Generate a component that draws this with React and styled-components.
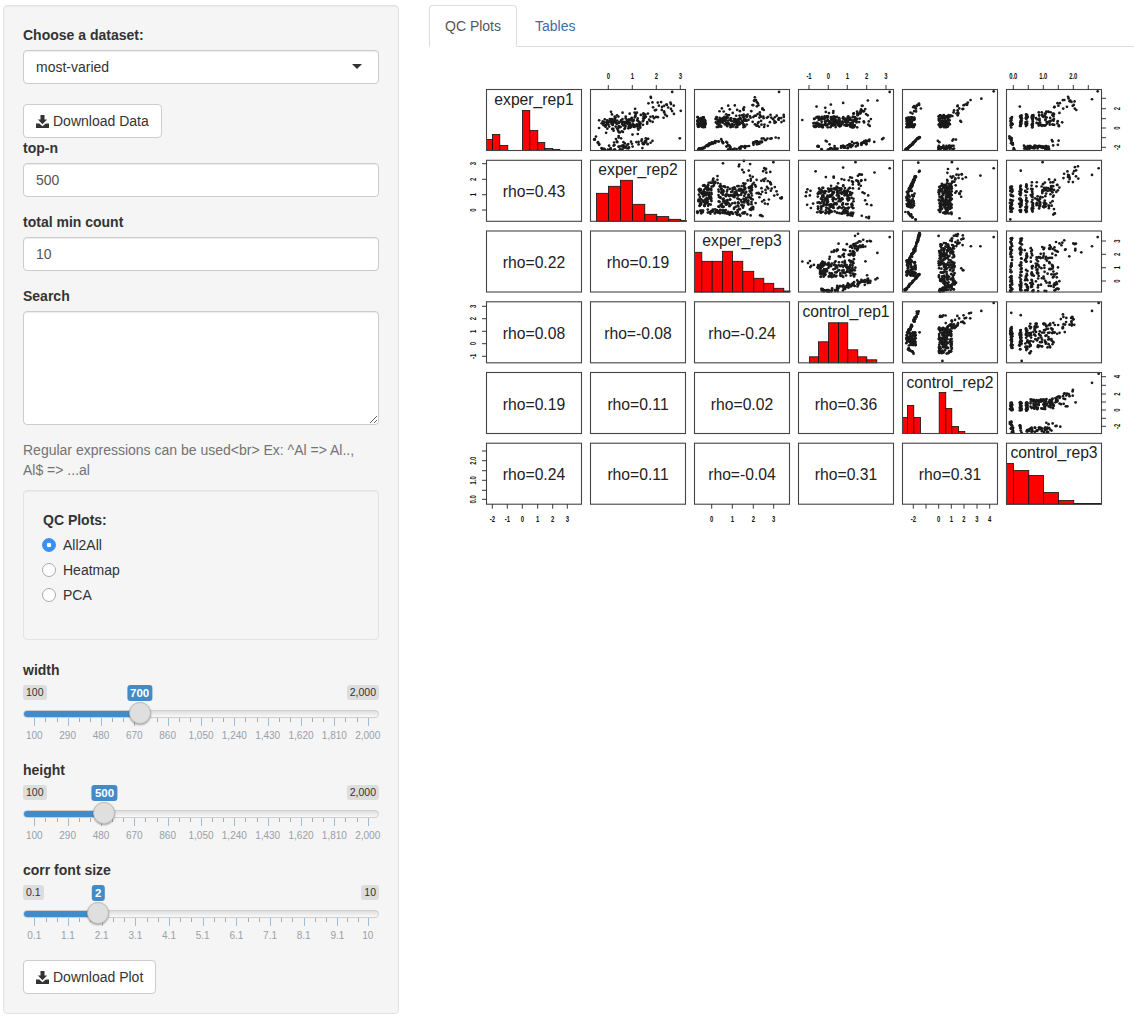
import styled, { createGlobalStyle } from "styled-components";

const GlobalStyle = createGlobalStyle`
  body {
    margin: 0;
    background: #fff;
    font-family: "Liberation Sans", Arial, sans-serif;
    font-size: 14px;
    line-height: 20px;
    color: #333;
  }
  * { box-sizing: border-box; }
`;

const Page = styled.div`
  display: flex;
  align-items: flex-start;
  width: 1134px;
`;

const Sidebar = styled.aside`
  flex: 0 0 396px;
  margin: 5px 0 0 3px;
  padding: 19px;
  background: #f5f5f5;
  border: 1px solid #e3e3e3;
  border-radius: 4px;
  box-shadow: inset 0 1px 1px rgba(0, 0, 0, 0.05);
`;

const Main = styled.main`
  flex: 1;
  margin: 5px 0 0 30px;
  min-width: 0;
`;

const Field = styled.div`
  margin-bottom: ${(p) => p.$gap ?? 15}px;
`;

const Label = styled.label`
  display: block;
  margin-bottom: 5px;
  font-weight: 700;
`;

const SliderLabel = styled.div`
  font-weight: 700;
`;

const SelectBox = styled.div`
  position: relative;
  height: 34px;
  padding: 6px 12px;
  background: #fff;
  border: 1px solid #ccc;
  border-radius: 4px;
  color: #333;
  box-shadow: inset 0 1px 1px rgba(0, 0, 0, 0.075);
  &::after {
    content: "";
    position: absolute;
    right: 16px;
    top: 13px;
    border-style: solid;
    border-width: 5px 5.5px 0;
    border-color: #333 transparent transparent;
  }
`;

const TextInput = styled.input`
  display: block;
  width: 100%;
  height: 34px;
  padding: 6px 12px;
  background: #fff;
  border: 1px solid #ccc;
  border-radius: 4px;
  color: #555;
  font: inherit;
  box-shadow: inset 0 1px 1px rgba(0, 0, 0, 0.075);
`;

const TextArea = styled.textarea`
  display: block;
  width: 100%;
  height: 114px;
  padding: 6px 12px;
  background: #fff;
  border: 1px solid #ccc;
  border-radius: 4px;
  font: inherit;
  box-shadow: inset 0 1px 1px rgba(0, 0, 0, 0.075);
`;

const Help = styled.div`
  max-width: 345px;
  margin-bottom: 10px;
  color: #737373;
`;

const Button = styled.button`
  display: inline-flex;
  align-items: center;
  gap: 4px;
  height: 34px;
  padding: 6px 12px;
  background: #fff;
  border: 1px solid #ccc;
  border-radius: 4px;
  color: #333;
  font: inherit;
  vertical-align: top;
`;

const ButtonRow = styled.div`
  height: 34px;
`;

const Well = styled.div`
  height: 150px;
  margin-bottom: 20px;
  padding: 19px;
  background: #f5f5f5;
  border: 1px solid #e3e3e3;
  border-radius: 4px;
  box-shadow: inset 0 1px 1px rgba(0, 0, 0, 0.05);
`;

const RadioRow = styled.div`
  display: flex;
  align-items: center;
  gap: 7px;
  height: 20px;
  margin: 0 0 5px -1px;
`;

const RadioDot = styled.span`
  flex: 0 0 14px;
  height: 14px;
  border-radius: 50%;
  background: ${(p) => (p.$checked ? "radial-gradient(circle, #fff 2px, #3b8ff3 2.6px)" : "#fff")};
  border: 1px solid ${(p) => (p.$checked ? "#3b8ff3" : "#aaa")};
`;

const SliderBlock = styled.div`
  position: relative;
  height: 60px;
  margin-bottom: 20px;
`;

const EdgeTag = styled.span`
  position: absolute;
  top: 5px;
  ${(p) => (p.$right ? "right: 0;" : "left: 0;")}
  height: 15px;
  padding: 0 3px;
  background: #ddd;
  border-radius: 3px;
  color: #333;
  font-size: 10.5px;
  line-height: 15px;
`;

const Track = styled.div`
  position: absolute;
  top: 30px;
  left: 0;
  right: 0;
  height: 8px;
  overflow: hidden;
  border: 1px solid #cfcfcf;
  border-radius: 4px;
  background: linear-gradient(to bottom, #dedede, #fafafa);
`;

const TrackFill = styled.div`
  height: 8px;
  margin-top: -1px;
  background: #428bca;
`;

const Scale = styled.div`
  position: absolute;
  top: 0;
  bottom: 0;
  left: 11.3px;
  right: 11.3px;
`;

const Mark = styled.span`
  position: absolute;
  top: 38px;
  width: 1px;
  height: ${(p) => (p.$major ? 8 : 4)}px;
  background: ${(p) => (p.$major ? "#9dbcd8" : "#aaa")};
`;

const MarkText = styled.span`
  position: absolute;
  top: 50px;
  transform: translateX(-50%);
  color: #98a0a8;
  font-size: 10px;
  line-height: 12px;
`;

const Badge = styled.span`
  position: absolute;
  top: 5px;
  height: 16px;
  padding: 0 3px;
  transform: translateX(-50%);
  background: #428bca;
  border-radius: 3px;
  color: #fff;
  font-size: 11.5px;
  font-weight: 700;
  line-height: 16px;
`;

const Handle = styled.span`
  position: absolute;
  top: 22px;
  width: 22px;
  height: 22px;
  transform: translateX(-50%);
  background: #dfdfdf;
  border: 1px solid #bdbdbd;
  border-radius: 50%;
  box-shadow: 0 1px 2px rgba(0, 0, 0, 0.35);
`;

const TabBar = styled.div`
  display: flex;
  gap: 2px;
  height: 42px;
  border-bottom: 1px solid #ddd;
`;

const Tab = styled.div`
  height: 42px;
  padding: 10px 15px;
  border: 1px solid ${(p) => (p.$active ? "#ddd" : "transparent")};
  border-bottom-color: ${(p) => (p.$active ? "#fff" : "transparent")};
  border-radius: 4px 4px 0 0;
  background: ${(p) => (p.$active ? "#fff" : "transparent")};
  color: ${(p) => (p.$active ? "#555" : "#3a6ea5")};
`;

const PlotSvg = styled.svg`
  display: block;
  width: 700px;
  height: 500px;
  margin-left: 5px;
`;

const CellText = styled.text`
  fill: #222;
  font-family: "Liberation Sans", Arial, sans-serif;
  font-size: 15.7px;
  text-anchor: middle;
`;

const AxisText = styled.text`
  fill: #111;
  font-family: "Liberation Sans", Arial, sans-serif;
  font-size: 8.2px;
  font-weight: 700;
  text-anchor: middle;
`;

function DownloadIcon() {
  return (
    <svg width="13" height="13" viewBox="0 0 13 13" fill="#333">
      <path d="M4.5 0h4v4.6h2.6L6.5 9.2 1.9 4.6h2.6z" />
      <path d="M0 8.6h3.2l3.3 2.6 3.3-2.6H13V13H0z" />
    </svg>
  );
}

const widthMarks = [100, 290, 480, 670, 860, 1050, 1240, 1430, 1620, 1810, 2000];
const fontMarks = [0.1, 1.1, 2.1, 3.1, 4.1, 5.1, 6.1, 7.1, 8.1, 9.1, 10];
const fmt = (v) => v.toLocaleString("en-US");

function RangeSlider({ min, max, value, marks }) {
  const pct = (v) => ((v - min) / (max - min)) * 100;
  const minors = marks.slice(1).flatMap((m, i) => {
    const step = (m - marks[i]) / 3;
    return [marks[i] + step, marks[i] + step * 2];
  });
  return (
    <SliderBlock>
      <EdgeTag>{fmt(min)}</EdgeTag>
      <EdgeTag $right>{fmt(max)}</EdgeTag>
      <Track>
        <TrackFill style={{ width: 11.3 + pct(value) * 3.334 }} />
      </Track>
      <Scale>
        {minors.map((m) => (
          <Mark key={m} style={{ left: `${pct(m)}%` }} />
        ))}
        {marks.map((m) => (
          <Mark key={m} $major style={{ left: `${pct(m)}%` }} />
        ))}
        {marks.map((m) => (
          <MarkText key={m} style={{ left: `${pct(m)}%` }}>
            {fmt(m)}
          </MarkText>
        ))}
        <Handle style={{ left: `${pct(value)}%` }} />
        <Badge style={{ left: `${pct(value)}%` }}>{fmt(value)}</Badge>
      </Scale>
    </SliderBlock>
  );
}

// plot geometry, in page pixels
const colX = [486.5, 590.5, 694.5, 798.5, 902.5, 1006.5];
const rowY = [89.5, 160.3, 231, 301.8, 372.5, 443.2];
const CELL_W = 95;
const CELL_H = 61;

const names = ["exper_rep1", "exper_rep2", "exper_rep3", "control_rep1", "control_rep2", "control_rep3"];

const rho = {
  "1,0": "0.43", "2,0": "0.22", "2,1": "0.19", "3,0": "0.08", "3,1": "-0.08", "3,2": "-0.24",
  "4,0": "0.19", "4,1": "0.11", "4,2": "0.02", "4,3": "0.36",
  "5,0": "0.24", "5,1": "0.11", "5,2": "-0.04", "5,3": "0.31", "5,4": "0.31",
};

// histogram bars as bin edges and heights, in pixels inside the cell
const hists = [
  { x: [0, 6, 13.3, 21.3, 36, 43.3, 51.3, 58.3, 66.3, 73.3], h: [11, 16, 5, 0, 40, 20, 8, 2, 1] },
  { x: [6, 18, 30, 42, 54.3, 66.3, 78.3, 90.3, 96], h: [28, 35, 41, 17, 7, 4.7, 2, 0.7] },
  { x: [0, 7.3, 17.7, 28, 38, 48.3, 59.3, 69.3, 79.3, 89.3, 95.6], h: [39.7, 30.7, 30.7, 40.7, 30.7, 20.7, 13.7, 8.7, 3.7, 1] },
  { x: [11, 20, 30, 40, 49.3, 59.3, 68.3, 78.3], h: [6, 21, 40, 40, 13, 6, 3] },
  { x: [0, 5, 11.3, 18, 36.7, 43.3, 49.3, 56, 62.3], h: [16, 28, 16, 0, 41, 25, 7, 2] },
  { x: [0, 7, 22.3, 37, 52, 67.3, 95], h: [40.7, 33.7, 28.7, 11.7, 3.7, 0.7] },
];

function makeRandom(seed) {
  let s = seed;
  return () => {
    s = (s + 0x6d2b79f5) | 0;
    let t = Math.imul(s ^ (s >>> 15), 1 | s);
    t = (t + Math.imul(t ^ (t >>> 7), 61 | t)) ^ t;
    return ((t ^ (t >>> 14)) >>> 0) / 4294967296;
  };
}

// [n, x0, y0, x1, y1, jitter]: n points along a line, or a box when jitter is "box"
const clouds = {
  "0,1": [
    [110, 0.13, 0.56, 0.55, 0.54, 0.05], [45, 0.45, 0.5, 0.9, 0.24, 0.04], [40, 0.13, 0.5, 0.5, 0.62, "box"],
    [12, 0.03, 0.8, 0.15, 1, 0.005], [50, 0.2, 0.98, 0.63, 0.85, 0.025], [10, 0.25, 0.8, 0.42, 0.92, 0.03],
    [1, 0.86, 0.04, 0.86, 0.04, 0], [1, 0.95, 0.35, 0.95, 0.35, 0], [1, 0.94, 0.8, 0.94, 0.8, 0], [5, 0.6, 0.2, 0.7, 0.2, 0.02],
  ],
  "0,2": [
    [70, 0.03, 0.45, 0.12, 0.62, "box"], [110, 0.22, 0.45, 0.55, 0.62, "box"], [50, 0.5, 0.4, 0.95, 0.62, "box"],
    [30, 0.25, 0.25, 0.75, 0.45, "box"], [40, 0.03, 1, 0.22, 0.85, 0.006], [22, 0.25, 0.8, 0.4, 1, 0.025],
    [40, 0.42, 1, 0.75, 0.82, 0.012], [1, 0.89, 0.04, 0.89, 0.04, 0], [5, 0.75, 0.8, 0.9, 0.8, 0.005], [6, 0.6, 0.12, 0.68, 0.22, 0.02],
  ],
  "0,3": [
    [190, 0.15, 0.44, 0.6, 0.62, "box"], [30, 0.55, 0.52, 0.72, 0.3, 0.025], [10, 0.65, 0.6, 0.75, 0.5, 0.03],
    [6, 0.2, 0.92, 0.25, 1, 0.005], [60, 0.3, 1, 0.8, 0.83, 0.015], [3, 0.28, 0.84, 0.33, 0.9, 0.01],
    [1, 0.96, 0.04, 0.96, 0.04, 0], [1, 0.83, 0.18, 0.83, 0.18, 0], [1, 0.73, 0.18, 0.73, 0.18, 0], [1, 0.47, 0.22, 0.47, 0.22, 0],
    [1, 0.19, 0.28, 0.19, 0.28, 0], [1, 0.04, 0.5, 0.04, 0.5, 0], [2, 0.9, 0.8, 0.85, 0.82, 0.01], [6, 0.28, 0.3, 0.4, 0.38, 0.03],
  ],
  "0,4": [
    [80, 0.04, 0.45, 0.13, 0.62, "box"], [14, 0.1, 0.42, 0.18, 0.22, 0.015], [50, 0.03, 1, 0.18, 0.78, 0.004],
    [100, 0.38, 0.42, 0.5, 0.62, "box"], [24, 0.48, 0.48, 0.72, 0.18, 0.025], [8, 0.38, 0.8, 0.38, 1, 0.004], [40, 0.39, 0.92, 0.55, 0.98, "box"],
    [3, 0.48, 0.84, 0.6, 0.82, 0.005], [1, 0.96, 0.03, 0.96, 0.03, 0], [1, 0.83, 0.15, 0.83, 0.15, 0], [2, 0.6, 0.5, 0.64, 0.5, 0.01],
  ],
  "0,5": [
    [18, 0.05, 0.45, 0.05, 0.62, 0.006], [18, 0.15, 0.42, 0.15, 0.62, 0.006], [22, 0.21, 0.42, 0.21, 0.62, 0.006],
    [22, 0.27, 0.4, 0.27, 0.62, 0.006], [50, 0.31, 0.36, 0.5, 0.6, "box"], [20, 0.45, 0.4, 0.72, 0.2, 0.04], [6, 0.5, 0.55, 0.55, 0.6, 0.02],
    [20, 0.04, 0.78, 0.08, 1, 0.006], [55, 0.17, 0.92, 0.45, 0.98, "box"], [5, 0.45, 0.84, 0.55, 0.85, 0.02],
    [1, 0.96, 0.03, 0.96, 0.03, 0], [1, 0.9, 0.16, 0.9, 0.16, 0], [1, 0.14, 0.28, 0.14, 0.28, 0], [3, 0.65, 0.25, 0.72, 0.3, 0.02],
  ],
  "1,2": [
    [80, 0.04, 0.4, 0.18, 0.75, "box"], [30, 0.1, 0.5, 0.24, 0.3, 0.03], [170, 0.25, 0.42, 0.62, 0.82, "box"], [50, 0.5, 0.3, 0.92, 0.72, "box"],
    [70, 0.03, 0.83, 0.58, 0.88, 0.012], [18, 0.45, 0.1, 0.82, 0.3, 0.04], [1, 0.3, 0.05, 0.3, 0.05, 0], [1, 0.83, 0.03, 0.83, 0.03, 0], [3, 0.68, 0.9, 0.8, 0.98, 0.01],
  ],
  "1,3": [
    [190, 0.2, 0.45, 0.58, 0.8, "box"], [40, 0.2, 0.84, 0.6, 0.87, 0.012], [30, 0.4, 0.45, 0.72, 0.3, 0.05],
    [8, 0.1, 0.42, 0.13, 0.75, 0.02], [4, 0.62, 0.9, 0.75, 0.92, 0.01], [6, 0.68, 0.48, 0.76, 0.8, 0.02], [1, 0.96, 0.13, 0.96, 0.13, 0],
    [1, 0.6, 0.03, 0.6, 0.03, 0], [1, 0.47, 0.12, 0.47, 0.12, 0], [1, 0.18, 0.18, 0.18, 0.18, 0], [1, 0.8, 0.2, 0.8, 0.2, 0], [3, 0.28, 0.3, 0.44, 0.23, 0.01],
  ],
  "1,4": [
    [55, 0.14, 0.26, 0.07, 0.5, 0.006], [60, 0.04, 0.5, 0.13, 0.78, "box"], [14, 0.03, 0.83, 0.15, 0.98, 0.006], [4, 0.17, 0.02, 0.18, 0.2, 0.003],
    [170, 0.38, 0.4, 0.52, 0.83, "box"], [24, 0.45, 0.42, 0.65, 0.22, 0.03], [14, 0.38, 0.84, 0.52, 0.87, 0.006], [6, 0.5, 0.55, 0.62, 0.55, 0.02],
    [1, 0.96, 0.13, 0.96, 0.13, 0], [1, 0.82, 0.25, 0.82, 0.25, 0], [1, 0.52, 0.03, 0.52, 0.03, 0], [1, 0.6, 0.95, 0.6, 0.95, 0], [3, 0.45, 0.16, 0.6, 0.2, 0.02],
  ],
  "1,5": [
    [36, 0.05, 0.42, 0.05, 0.85, 0.007], [36, 0.15, 0.4, 0.15, 0.85, 0.007], [26, 0.21, 0.38, 0.21, 0.85, 0.006], [26, 0.27, 0.36, 0.27, 0.85, 0.006],
    [70, 0.3, 0.36, 0.5, 0.8, "box"], [24, 0.42, 0.5, 0.72, 0.25, 0.035], [1, 0.97, 0.13, 0.97, 0.13, 0], [1, 0.9, 0.24, 0.9, 0.24, 0], [4, 0.72, 0.16, 0.72, 0.1, 0.02],
    [1, 0.38, 0.03, 0.38, 0.03, 0], [1, 0.15, 0.17, 0.15, 0.17, 0], [1, 0.04, 0.97, 0.04, 0.97, 0], [3, 0.48, 0.9, 0.52, 0.85, 0.005],
  ],
  "2,3": [
    [110, 0.2, 0.5, 0.6, 0.76, "box"], [30, 0.2, 0.5, 0.28, 0.75, "box"], [80, 0.3, 1, 0.75, 0.8, 0.015], [12, 0.22, 0.9, 0.27, 1, 0.005],
    [50, 0.38, 0.45, 0.62, 0.25, 0.06], [20, 0.55, 0.3, 0.68, 0.2, 0.03], [1, 0.96, 0.1, 0.96, 0.1, 0], [1, 0.04, 0.5, 0.04, 0.5, 0],
    [1, 0.83, 0.36, 0.83, 0.36, 0], [2, 0.75, 0.17, 0.78, 0.16, 0.003], [4, 0.72, 0.72, 0.82, 0.75, 0.02], [5, 0.1, 0.5, 0.14, 0.6, 0.02],
  ],
  "2,4": [
    [35, 0.18, 0.04, 0.13, 0.3, 0.004], [35, 0.13, 0.3, 0.05, 0.53, 0.006], [70, 0.04, 0.48, 0.14, 0.74, "box"], [45, 0.18, 0.7, 0.03, 0.97, 0.004],
    [190, 0.38, 0.2, 0.55, 0.98, "box"], [40, 0.38, 1, 0.56, 0.85, 0.01], [24, 0.48, 0.25, 0.6, 0.15, 0.04], [3, 0.62, 0.62, 0.64, 0.68, 0.01],
    [1, 0.96, 0.1, 0.96, 0.1, 0], [1, 0.82, 0.25, 0.82, 0.25, 0], [1, 0.72, 0.25, 0.72, 0.25, 0], [1, 0.38, 0.08, 0.38, 0.08, 0],
  ],
  "2,5": [
    [60, 0.05, 0.12, 0.05, 1, 0.007], [50, 0.15, 0.12, 0.15, 1, 0.007], [30, 0.21, 0.3, 0.21, 1, 0.007], [30, 0.27, 0.3, 0.27, 1, 0.009],
    [26, 0.33, 0.4, 0.33, 1, 0.012], [70, 0.36, 0.25, 0.55, 1, "box"], [14, 0.42, 0.25, 0.72, 0.25, 0.05], [3, 0.5, 0.9, 0.55, 0.85, 0.01],
    [1, 0.96, 0.1, 0.96, 0.1, 0], [1, 0.9, 0.25, 0.9, 0.25, 0], [3, 0.72, 0.16, 0.72, 0.25, 0.01],
  ],
  "3,4": [
    [40, 0.17, 0.15, 0.06, 0.5, 0.006], [75, 0.04, 0.5, 0.14, 0.72, "box"], [12, 0.05, 0.75, 0.12, 0.85, 0.005], [1, 0.18, 0.5, 0.18, 0.5, 0],
    [150, 0.38, 0.42, 0.52, 0.85, "box"], [40, 0.45, 0.45, 0.7, 0.22, 0.025], [6, 0.38, 0.25, 0.45, 0.22, 0.005], [1, 0.42, 0.97, 0.42, 0.97, 0],
    [1, 0.96, 0.02, 0.96, 0.02, 0], [1, 0.83, 0.15, 0.83, 0.15, 0],
  ],
  "3,5": [
    [36, 0.05, 0.4, 0.05, 0.8, 0.007], [1, 0.05, 0.18, 0.05, 0.18, 0], [28, 0.15, 0.45, 0.15, 0.8, 0.007], [1, 0.15, 0.22, 0.15, 0.22, 0], [22, 0.21, 0.38, 0.21, 0.8, 0.007],
    [24, 0.25, 0.35, 0.25, 0.85, 0.008], [70, 0.28, 0.35, 0.5, 0.75, "box"], [28, 0.42, 0.5, 0.72, 0.3, 0.035], [4, 0.68, 0.2, 0.72, 0.38, 0.01],
    [1, 0.97, 0.02, 0.97, 0.02, 0], [1, 0.9, 0.15, 0.9, 0.15, 0], [1, 0.16, 0.97, 0.16, 0.97, 0], [2, 0.55, 0.2, 0.6, 0.22, 0.01],
  ],
  "4,5": [
    [26, 0.05, 0.48, 0.05, 0.62, 0.006], [22, 0.15, 0.48, 0.15, 0.62, 0.006], [26, 0.21, 0.48, 0.21, 0.62, 0.006], [80, 0.25, 0.44, 0.5, 0.6, "box"],
    [34, 0.45, 0.5, 0.72, 0.35, 0.03], [20, 0.04, 0.8, 0.07, 1, 0.005], [8, 0.15, 0.85, 0.15, 1, 0.006], [45, 0.2, 0.9, 0.48, 0.98, "box"], [6, 0.42, 0.82, 0.56, 0.88, 0.015],
    [1, 0.97, 0.02, 0.97, 0.02, 0], [1, 0.9, 0.17, 0.9, 0.17, 0], [2, 0.6, 0.6, 0.66, 0.55, 0.01],
  ],
};

const gauss = (rnd) => (rnd() + rnd() + rnd() - 1.5) / 0.5;

function buildPoints(key) {
  const [r, c] = key.split(",").map(Number);
  const rnd = makeRandom(r * 97 + c * 13 + 5);
  const out = [];
  clouds[key].forEach(([n, x0, y0, x1, y1, jit]) => {
    for (let i = 0; i < n; i++) {
      let fx, fy;
      if (jit === "box") {
        fx = x0 + (x1 - x0) * rnd();
        fy = y0 + (y1 - y0) * rnd();
      } else {
        const t = n > 1 ? rnd() : 0;
        fx = x0 + (x1 - x0) * t + gauss(rnd) * jit;
        fy = y0 + (y1 - y0) * t + gauss(rnd) * jit * 1.6;
      }
      fx = Math.min(0.985, Math.max(0.01, fx));
      fy = Math.min(0.985, Math.max(0.01, fy));
      out.push([colX[c] + fx * CELL_W, rowY[r] + fy * CELL_H]);
    }
  });
  return out;
}

const scatter = Object.keys(clouds).map((key) => ({ key, points: buildPoints(key) }));

const topAxes = [
  { ticks: [608.3, 632.3, 656.3, 680.3], labels: { 608.3: "0", 632.3: "1", 656.3: "2", 680.3: "3" } },
  { ticks: [809, 828.3, 847.3, 866.7, 886], labels: { 809: "-1", 828.3: "0", 847.3: "1", 866.7: "2", 886: "3" } },
  { ticks: [1013.3, 1028.3, 1043.3, 1058.3, 1073.3, 1088.3], labels: { 1013.3: "0.0", 1043.3: "1.0", 1073.3: "2.0" } },
];

const bottomAxes = [
  { ticks: [492.3, 507.3, 522.3, 537.7, 552.7, 567.3], labels: { 492.3: "-2", 507.3: "-1", 522.3: "0", 537.7: "1", 552.7: "2", 567.3: "3" } },
  { ticks: [711.7, 732.3, 753.3, 773.7], labels: { 711.7: "0", 732.3: "1", 753.3: "2", 773.7: "3" } },
  { ticks: [913.3, 926, 938.7, 951.3, 964, 977, 989.7], labels: { 913.3: "-2", 938.7: "0", 951.3: "1", 964: "2", 977: "3", 989.7: "4" } },
];

const leftAxes = [
  { ticks: [163.7, 179.3, 194.7, 210], labels: { 163.7: "3", 179.3: "2", 194.7: "1", 210: "0" } },
  { ticks: [306.3, 318.7, 331.3, 343.7, 356.3], labels: { 306.3: "3", 318.7: "2", 331.3: "1", 343.7: "0", 356.3: "-1" } },
  { ticks: [451, 460.7, 470.7, 480.3, 490.3, 499.3], labels: { 460.7: "2.0", 480.3: "1.0", 499.3: "0.0" } },
];

const rightAxes = [
  { ticks: [98.3, 108.7, 118.7, 128, 137.7, 147.3], labels: { 108.7: "2", 128: "0", 147.3: "-2" } },
  { ticks: [241, 254.3, 267.7, 281], labels: { 241: "3", 254.3: "2", 267.7: "1", 281: "0" } },
  { ticks: [376.7, 385.3, 394, 402, 410, 418.3, 426.3], labels: { 376.7: "4", 394: "2", 410: "0", 426.3: "-2" } },
];

function HorizontalAxis({ axis, y, dir, textY }) {
  const { ticks, labels } = axis;
  return (
    <g>
      {ticks.map((t) => (
        <g key={t}>
          <line x1={t} x2={t} y1={y} y2={y + dir * 4.5} stroke="#222" strokeWidth="0.9" />
          {labels[t] && (
            <AxisText transform={`translate(${t} ${textY}) scale(0.72 1)`}>{labels[t]}</AxisText>
          )}
        </g>
      ))}
    </g>
  );
}

function VerticalAxis({ axis, x, dir, textX }) {
  const { ticks, labels } = axis;
  return (
    <g>
      {ticks.map((t) => (
        <g key={t}>
          <line x1={x} x2={x + dir * 4.5} y1={t} y2={t} stroke="#222" strokeWidth="0.9" />
          {labels[t] && (
            <AxisText transform={`translate(${textX} ${t}) rotate(-90) scale(0.72 1)`} y="3">
              {labels[t]}
            </AxisText>
          )}
        </g>
      ))}
    </g>
  );
}

function PairsPlot() {
  return (
    <PlotSvg viewBox="434 47 700 500">
      {hists.map((hist, i) => {
        const base = rowY[i] + CELL_H;
        return (
          <g key={i}>
            {hist.h.map((h, b) => (
              <rect
                key={b}
                x={colX[i] + hist.x[b]}
                y={base - h}
                width={hist.x[b + 1] - hist.x[b]}
                height={h}
                fill="#f00"
                stroke="#111"
                strokeWidth="0.8"
              />
            ))}
            <CellText x={colX[i] + CELL_W / 2} y={rowY[i] + 15}>{names[i]}</CellText>
          </g>
        );
      })}
      {scatter.map(({ key, points }) => (
        <g key={key} fill="#1a1a1a">
          {points.map(([x, y], i) => (
            <circle key={i} cx={x} cy={y} r="1.35" />
          ))}
        </g>
      ))}
      {Object.entries(rho).map(([key, value]) => {
        const [r, c] = key.split(",").map(Number);
        return (
          <CellText key={key} x={colX[c] + CELL_W / 2} y={rowY[r] + CELL_H / 2 + 6.5}>
            rho={value}
          </CellText>
        );
      })}
      {colX.map((x, c) =>
        rowY.map((y, r) => (
          <rect key={`${r}-${c}`} x={x} y={y} width={CELL_W} height={CELL_H} fill="none" stroke="#444" strokeWidth="1.1" />
        ))
      )}
      {topAxes.map((axis, i) => (
        <HorizontalAxis key={i} axis={axis} y={89.5} dir={-1} textY={79} />
      ))}
      {bottomAxes.map((axis, i) => (
        <HorizontalAxis key={i} axis={axis} y={504.2} dir={1} textY={522} />
      ))}
      {leftAxes.map((axis, i) => (
        <VerticalAxis key={i} axis={axis} x={486.5} dir={-1} textX={473} />
      ))}
      {rightAxes.map((axis, i) => (
        <VerticalAxis key={i} axis={axis} x={1101.5} dir={1} textX={1117} />
      ))}
    </PlotSvg>
  );
}

export default function App() {
  return (
    <Page>
      <GlobalStyle />
      <Sidebar>
        <Field $gap={20}>
          <Label>Choose a dataset:</Label>
          <SelectBox>most-varied</SelectBox>
        </Field>
        <ButtonRow>
          <Button>
            <DownloadIcon />
            Download Data
          </Button>
        </ButtonRow>
        <Field>
          <Label>top-n</Label>
          <TextInput readOnly value="500" />
        </Field>
        <Field>
          <Label>total min count</Label>
          <TextInput readOnly value="10" />
        </Field>
        <Field>
          <Label>Search</Label>
          <TextArea readOnly />
        </Field>
        <Help>Regular expressions can be used&lt;br&gt; Ex: ^Al =&gt; Al.., Al$ =&gt; ...al</Help>
        <Well>
          <Label>QC Plots:</Label>
          <RadioRow>
            <RadioDot $checked />
            All2All
          </RadioRow>
          <RadioRow>
            <RadioDot />
            Heatmap
          </RadioRow>
          <RadioRow>
            <RadioDot />
            PCA
          </RadioRow>
        </Well>
        <SliderLabel>width</SliderLabel>
        <RangeSlider min={100} max={2000} value={700} marks={widthMarks} />
        <SliderLabel>height</SliderLabel>
        <RangeSlider min={100} max={2000} value={500} marks={widthMarks} />
        <SliderLabel>corr font size</SliderLabel>
        <RangeSlider min={0.1} max={10} value={2} marks={fontMarks} />
        <Button>
          <DownloadIcon />
          Download Plot
        </Button>
      </Sidebar>
      <Main>
        <TabBar>
          <Tab $active>QC Plots</Tab>
          <Tab>Tables</Tab>
        </TabBar>
        <PairsPlot />
      </Main>
    </Page>
  );
}
